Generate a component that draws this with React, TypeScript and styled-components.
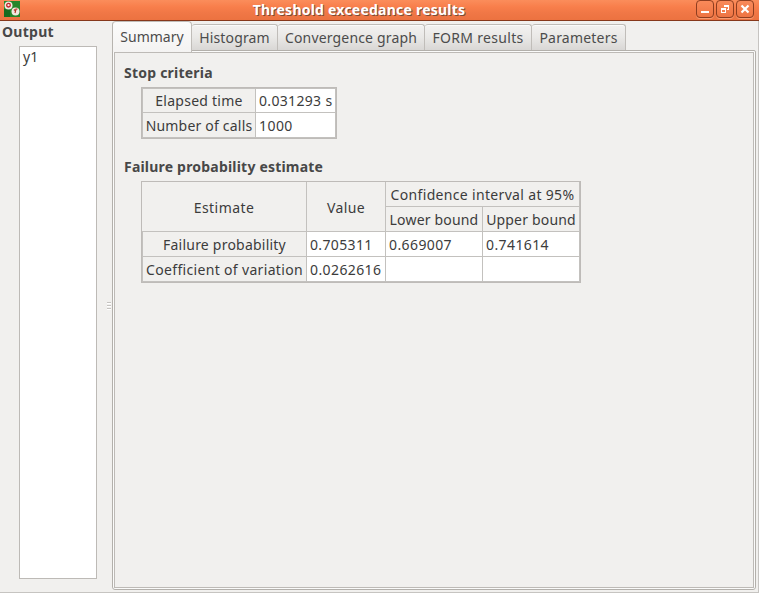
import React from 'react';
import styled, { createGlobalStyle, css } from 'styled-components';

const Global = createGlobalStyle`
  * { box-sizing: border-box; }
  body { margin: 0; overflow: hidden; background: #f1f0ee; }
`;

const Window = styled.div`
  width: 759px;
  height: 593px;
  display: flex;
  flex-direction: column;
  background: #f1f0ee;
  border-right: 1px solid #c6c4c1;
  border-bottom: 1px solid #c6c4c1;
  color: #3c3c3c;
  font: 14px/20px 'Noto Sans', sans-serif;
  white-space: nowrap;
`;

const TitleBar = styled.header`
  height: 21px;
  margin-right: -1px;
  flex: none;
  display: grid;
  grid-template-columns: 23px 1fr 64px;
  background: linear-gradient(#fb8d5b 0, #f87e4b 7px, #f07746 13px, #ec7240 20px);
  border-bottom: 1px solid #86381b;
`;

const AppIcon = styled.svg`
  margin: 1px 0 0 4px;
  display: block;
`;

const Title = styled.h1<{ $ls: number }>`
  margin: 0;
  text-align: center;
  font-size: 14px;
  line-height: 19px;
  font-weight: 700;
  color: #fff;
  text-shadow: 1px 1px 0 #7b4b37;
  letter-spacing: ${p => p.$ls}px;
`;

const WindowButtons = styled.div`
  display: flex;
  gap: 2px;
  padding-left: 1px;
`;

const WindowButton = styled.button`
  width: 18px;
  height: 18px;
  padding: 0;
  border: 1px solid #8f3e20;
  border-radius: 4px;
  background: linear-gradient(#f98a5a, #ee7443);
  box-shadow: 0 1px 0 #f79a70;
  svg { display: block; }
`;

const Body = styled.div`
  flex: 1;
  display: flex;
  min-height: 0;
`;

const Sidebar = styled.aside`
  width: 106px;
  display: flex;
  flex-direction: column;
`;

const Heading = styled.h2<{ $ls?: number }>`
  margin: 0;
  font-size: 14px;
  line-height: 20px;
  font-weight: 700;
  color: #484848;
  letter-spacing: ${p => p.$ls ?? 0}px;
`;

const SidebarTitle = styled(Heading)`
  padding: 1px 0 4px 2px;
`;

const OutputList = styled.ul`
  list-style: none;
  margin: 0 9px 0 19px;
  height: 533px;
  padding: 0 3px;
  border: 1px solid #bdbab6;
  background: #fff;
`;

const Splitter = styled.div`
  width: 6px;
  display: flex;
  flex-direction: column;
  justify-content: center;
  gap: 2px;
  padding-bottom: 2px;
  i {
    width: 4px;
    height: 1px;
    margin-left: 1px;
    background: #c6c4c1;
    box-shadow: 0 1px 0 #fff;
  }
`;

const Main = styled.main`
  width: 644px;
`;

const TabBar = styled.nav`
  height: 29px;
  display: flex;
  align-items: flex-end;
`;

const Tab = styled.div<{ $w: number; $ls: number; $active?: boolean }>`
  width: ${p => p.$w}px;
  height: 26px;
  line-height: 25px;
  text-align: center;
  letter-spacing: ${p => p.$ls}px;
  color: #4c4c4c;
  border: 1px solid #c0bdb9;
  border-left: 0;
  border-bottom: 0;
  border-radius: 3px 3px 0 0;
  background: linear-gradient(#f3f2f1, #e9e8e6 50%, #d9d7d5);
  box-shadow: inset 0 1px 0 #fbfbfa;
  ${p => p.$active && css`
    height: 31px;
    margin-bottom: -2px;
    z-index: 1;
    line-height: 29px;
    border-left: 1px solid #b7b4af;
    border-radius: 4px 4px 0 0;
    background: linear-gradient(#fcfcfb, #f4f3f2);
  `}
`;

const Pane = styled.section`
  height: 540px;
  border: 1px solid #b3b0ab;
  border-radius: 0 2px 3px 3px;
  padding: 1px;
  background: #fbfbfa;
`;

const PaneInner = styled.div`
  height: 100%;
  border: 1px solid #bdbab6;
  background: #f1f0ee;
  padding: 10px 9px;
`;

const Group = styled.section`
  margin-bottom: 18px;
`;

const Table = styled.div<{ $columns: string }>`
  display: inline-grid;
  vertical-align: top;
  grid-template-columns: ${p => p.$columns};
  grid-auto-rows: 25px;
  margin: 4px 0 0 17px;
  border: 1px solid #bebbb8;
`;

const Cell = styled.div<{ $ls?: number; $span?: string; $first?: boolean }>`
  border: 0 solid #c3c1be;
  border-width: ${p => (p.$first ? 1 : 0)}px 1px 1px 0;
  padding-top: ${p => (p.$first ? 1 : 2)}px;
  letter-spacing: ${p => p.$ls ?? 0}px;
  grid-area: ${p => p.$span ?? 'auto'};
  display: flex;
  align-items: center;
`;

const HeaderCell = styled(Cell)`
  justify-content: center;
`;

const RowHeader = styled(HeaderCell)`
  border-left-width: 1px;
`;

const ValueCell = styled(Cell)`
  padding-left: 3px;
  background: #fff;
`;

const tabs = [
  { name: 'Summary', w: 80, ls: 0 },
  { name: 'Histogram', w: 86, ls: 0.15 },
  { name: 'Convergence graph', w: 147, ls: 0.17 },
  { name: 'FORM results', w: 107, ls: 0.32 },
  { name: 'Parameters', w: 94, ls: 0.2 },
];

export default function App() {
  return (
    <>
      <Global />
      <Window>
        <TitleBar>
          <AppIcon width="16" height="16" viewBox="0 0 16 16">
            <rect width="16" height="16" fill="#26862a" />
            <path d="M0 8h6v8H0z" fill="#176b20" />
            <circle cx="4.5" cy="4.5" r="4" fill="#f3e9df" />
            <circle cx="4.5" cy="4.2" r="1.8" fill="none" stroke="#c3202a" strokeWidth="1.3" />
            <circle cx="11.5" cy="10.5" r="4" fill="#f3e9df" />
            <path d="M10 8.5l1 1M13.5 8h-1.5l-1 4" fill="none" stroke="#b53227" strokeWidth="1.2" />
          </AppIcon>
          <Title $ls={0.23}>Threshold exceedance results</Title>
          <WindowButtons>
            <WindowButton aria-label="Minimize">
              <svg width="16" height="16"><path d="M4 10h8v2H4z" fill="#fff" /></svg>
            </WindowButton>
            <WindowButton aria-label="Restore">
              <svg width="16" height="16" fill="none" stroke="#fff" shapeRendering="crispEdges">
                <path d="M7.5 6V4.5h4v4H10M4.5 8.5h4v3h-4zM7 5.5h5M4 7.5h5" />
              </svg>
            </WindowButton>
            <WindowButton aria-label="Close">
              <svg width="16" height="16"><path d="M4.5 4.5l7 7M11.5 4.5l-7 7" stroke="#fff" strokeWidth="2.2" /></svg>
            </WindowButton>
          </WindowButtons>
        </TitleBar>
        <Body>
          <Sidebar>
            <SidebarTitle $ls={0.28}>Output</SidebarTitle>
            <OutputList><li>y1</li></OutputList>
          </Sidebar>
          <Splitter><i /><i /><i /></Splitter>
          <Main>
            <TabBar>
              {tabs.map((t, i) => (
                <Tab key={t.name} $w={t.w} $ls={t.ls} $active={i === 0}>{t.name}</Tab>
              ))}
            </TabBar>
            <Pane>
              <PaneInner>
                <Group>
                  <Heading $ls={0.22}>Stop criteria</Heading>
                  <Table $columns="114px 80px">
                    <RowHeader $first $ls={0.25}>Elapsed time</RowHeader>
                    <ValueCell $first $ls={0.33}>0.031293 s</ValueCell>
                    <RowHeader $ls={0.2}>Number of calls</RowHeader>
                    <ValueCell $ls={0.45}>1000</ValueCell>
                  </Table>
                </Group>
                <Group>
                  <Heading $ls={0.2}>Failure probability estimate</Heading>
                  <Table $columns="165px 79px 97px 97px">
                    <HeaderCell $span="1 / 1 / 3 / 2" $ls={0.45}>Estimate</HeaderCell>
                    <HeaderCell $span="1 / 2 / 3 / 3" $ls={0.35}>Value</HeaderCell>
                    <HeaderCell $span="1 / 3 / 2 / 5" $ls={0.33}>Confidence interval at 95%</HeaderCell>
                    <HeaderCell $ls={0.18}>Lower bound</HeaderCell>
                    <HeaderCell $ls={0.18}>Upper bound</HeaderCell>
                    <RowHeader $ls={0.22}>Failure probability</RowHeader>
                    <ValueCell $ls={0.35}>0.705311</ValueCell>
                    <ValueCell $ls={0.4}>0.669007</ValueCell>
                    <ValueCell $ls={0.4}>0.741614</ValueCell>
                    <RowHeader $ls={0.33}>Coefficient of variation</RowHeader>
                    <ValueCell $ls={0.4}>0.0262616</ValueCell>
                    <ValueCell />
                    <ValueCell />
                  </Table>
                </Group>
              </PaneInner>
            </Pane>
          </Main>
        </Body>
      </Window>
    </>
  );
}
